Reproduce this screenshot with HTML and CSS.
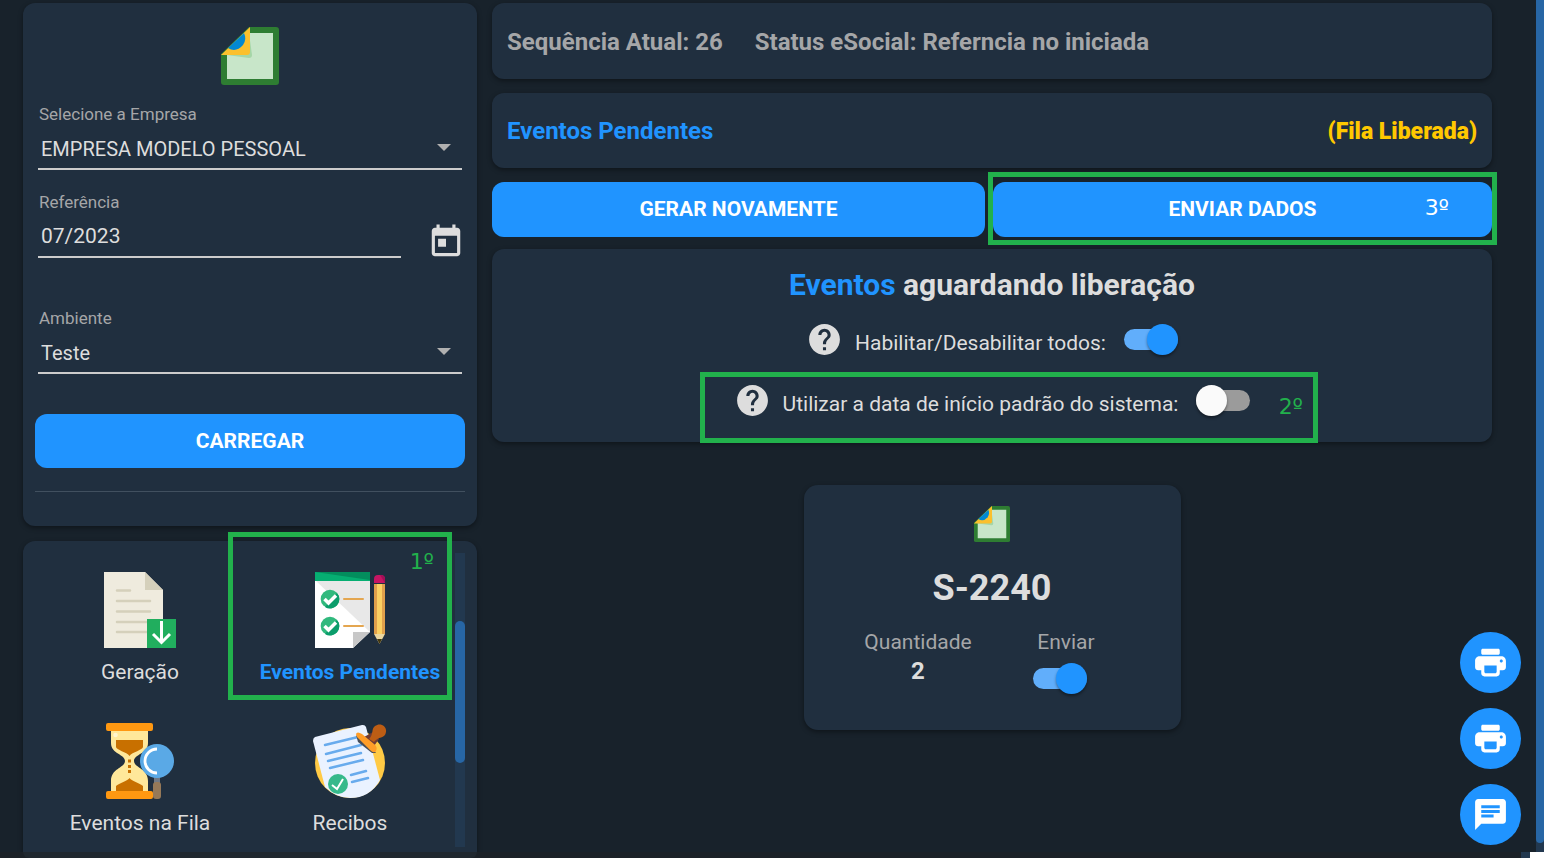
FILE: index.html
```html
<!DOCTYPE html>
<html lang="pt-BR">
<head>
<meta charset="utf-8">
<meta name="viewport" content="width=device-width, initial-scale=1">
<title>eSocial - Eventos Pendentes</title>
<link rel="stylesheet" href="styles.css">
</head>
<body>
<svg class="defs" aria-hidden="true">
  <symbol id="logo" viewBox="0 0 58 58">
    <path fill="#2e7d32" d="M28 0H55Q58 0 58 3V55Q58 58 55 58H3Q0 58 0 55V27Z"/>
    <path fill="#c8e6c9" d="M29 6H52V52H6V27Z"/>
    <path fill="#a5d6a7" d="M28 6L31 28Q31 31 28 31L6 28V24Z"/>
    <path fill="#fbc02d" d="M29 0V25Q29 28 26 28H0Z"/>
    <path fill="#0288d1" d="M23 6Q26 12 22 18Q15 26 7 21Z"/>
  </symbol>
  <symbol id="help" viewBox="0 0 24 24">
    <path d="M12 2C6.48 2 2 6.48 2 12s4.48 10 10 10 10-4.48 10-10S17.52 2 12 2zm1 17h-2v-2h2v2zm2.07-7.75l-.9.92C13.45 12.9 13 13.5 13 15h-2v-.5c0-1.1.45-2.1 1.17-2.83l1.24-1.26c.37-.36.59-.86.59-1.41 0-1.1-.9-2-2-2s-2 .9-2 2H8c0-2.21 1.79-4 4-4s4 1.79 4 4c0 .88-.36 1.68-.93 2.25z"/>
  </symbol>
  <symbol id="print" viewBox="0 0 24 24">
    <path d="M19 8H5c-1.66 0-3 1.34-3 3v4c0 1.1.9 2 2 2h2v2c0 1.1.9 2 2 2h8c1.1 0 2-.9 2-2v-2h2c1.1 0 2-.9 2-2v-4c0-1.66-1.34-3-3-3zm-4 11H9c-.55 0-1-.45-1-1v-4h8v4c0 .55-.45 1-1 1zm4-7c-.55 0-1-.45-1-1s.45-1 1-1 1 .45 1 1-.45 1-1 1zm-2-9H7c-.55 0-1 .45-1 1v2c0 .55.45 1 1 1h10c.55 0 1-.45 1-1V4c0-.55-.45-1-1-1z"/>
  </symbol>
</svg>

<div class="shell">
  <div class="content">
    <aside class="sidebar">
      <form class="card filters">
        <svg class="logo" role="img" aria-label="eSocial"><use href="#logo"/></svg>
        <div class="field">
          <label for="empresa">Selecione a Empresa</label>
          <div class="select"><select id="empresa"><option>EMPRESA MODELO PESSOAL</option></select></div>
        </div>
        <div class="date-row">
          <div class="field">
            <label for="referencia">Referência</label>
            <input id="referencia" type="text" value="07/2023">
          </div>
          <button class="icon-button" type="button" aria-label="Abrir calendário">
            <svg viewBox="0 0 24 24"><path d="M19 3h-1V1h-2v2H8V1H6v2H5c-1.11 0-1.99.9-1.99 2L3 19c0 1.1.89 2 2 2h14c1.1 0 2-.9 2-2V5c0-1.1-.9-2-2-2zm0 16H5V8h14v11zM7 10h5v5H7z"/></svg>
          </button>
        </div>
        <div class="field">
          <label for="ambiente">Ambiente</label>
          <div class="select"><select id="ambiente"><option>Teste</option></select></div>
        </div>
        <button class="button load" type="button">CARREGAR</button>
        <hr class="divider">
      </form>

      <nav class="card menu">
        <div class="menu-grid">
          <a class="menu-item" href="#geracao">
            <svg class="menu-icon" viewBox="0 0 76 76">
              <path fill="#efebde" d="M2 0H43L61 18V76H2Z"/>
              <path fill="#d5d0bb" d="M43 0V18H61Z"/>
              <path stroke="#d5d0bb" stroke-width="2.5" stroke-linecap="round" d="M15 18.500H28M15 29H48M15 39.500H48M15 50H48M15 60H48"/>
              <path fill="#21ae5e" d="M45 47H74V76H45Z"/>
              <path fill="none" stroke="#fff" stroke-width="3" d="M59.500 49V70M51 62L59.500 70.500L68 62"/>
            </svg>
            <span>Geração</span>
          </a>
          <a class="menu-item active" href="#pendentes">
            <svg class="menu-icon" viewBox="0 0 76 76">
              <path fill="#fff" d="M3 8H58V60L41 76H3Z"/>
              <path fill="#e8e8e8" d="M3 8H58V60Z"/>
              <path fill="#c8c8c8" d="M58 60H41V76Z"/>
              <path fill="#06ae72" d="M3 0H58V9H3Z"/>
              <path fill="#038d5d" d="M3 0H58V8Z"/>
              <g fill="#31b97d"><circle cx="18" cy="27" r="9.300"/><circle cx="18" cy="54" r="9.300"/></g>
              <path fill="#0b9d6b" d="M25 21A9.300 9.300 0 0 1 13 35ZM25 48A9.300 9.300 0 0 1 13 62Z"/>
              <path fill="none" stroke="#fff" stroke-width="3.500" d="M12.500 27L16.500 31L24 23.500M12.500 54L16.500 58L24 50.500"/>
              <path stroke="#e4a650" stroke-width="2" stroke-linecap="round" d="M32 27H51M32 54H51"/>
              <path fill="#c71563" d="M62 11V7Q62 3 66 3H69Q73 3 73 7V11Z"/>
              <path fill="#a20f58" d="M68 3Q73 3 73 7V11Z"/>
              <path fill="#e0a04b" d="M62 12H73V62H62Z"/><path fill="#fbd062" d="M65 12H70V62H65Z"/>
              <path fill="#ebd7a0" d="M62 62H73L67.500 72Z"/><path fill="#423711" d="M65 67H70L67.500 72Z"/>
            </svg>
            <span>Eventos Pendentes</span>
            <span class="mark mark-menu">1º</span>
          </a>
          <a class="menu-item" href="#fila">
            <svg class="menu-icon" viewBox="0 0 76 76">
              <path fill="#ffe89a" d="M9 6H46V20C46 31 32 31 32 38C32 45 46 45 46 58V70H9V58C9 45 23 45 23 38C23 31 9 31 9 20Z"/>
              <path fill="#c87000" d="M14 17H41V24C41 27 30 29 27.500 33C25 29 14 27 14 24ZM14 70V63C17 60 26 58 27.500 55C29 58 38 60 41 63V70ZM26 36.500H29V39.500H26ZM26 42H29V45H26ZM26 47H29V50H26Z"/>
              <circle cx="13.500" cy="12" r="2.300" fill="#fff5cf"/>
              <path fill="#ff9811" d="M6 0H49Q51 0 51 2V6Q51 8 49 8H6Q4 8 4 6V2Q4 0 6 0ZM6 68H49Q51 68 51 70V74Q51 76 49 76H6Q4 76 4 74V70Q4 68 6 68Z"/>
              <path fill="#707985" d="M52 53H58V62H52Z"/><rect x="51" y="59" width="8" height="17" rx="3" fill="#967958"/>
              <circle cx="55" cy="38" r="17" fill="#5aa9e6"/>
              <path fill="none" stroke="#fff" stroke-width="2.800" d="M55 26A12 12 0 0 0 55 50"/>
            </svg>
            <span>Eventos na Fila</span>
          </a>
          <a class="menu-item" href="#recibos">
            <svg class="menu-icon" viewBox="0 0 76 76">
              <circle cx="38" cy="40" r="35" fill="#ffca45"/>
              <path fill="#eaf2ff" d="M3 14L50 2Q53 1.500 54 4L68 57Q58 75 38 75Q24 75 13 64L1 18Q1 15 3 14Z"/>
              <path stroke="#68abed" stroke-width="2.500" stroke-linecap="round" d="M13 22L46 14M14 31L49 22M16 38L49 30M18 45L51 37M39 52L54 48M40 59L56 55"/>
              <circle cx="26" cy="61" r="10" fill="#36b98b"/>
              <path fill="none" stroke="#fff" stroke-width="2" d="M20 62L25 66L31 56"/>
              <path fill="#464d59" d="M44 12L46 19L60 30L64 30L60 25Z"/>
              <path fill="#713c35" d="M52 14L61 9L67 16L62 23Z"/>
              <path fill="#ff9d28" d="M44 11Q45 8 50 11L62 21Q66 24 64 28Q62 31 58 27L45 14Z"/>
              <path fill="#bd5d14" d="M57 16C62 11 59 6 63 3C68 -1 75 3 74 9C73 16 66 13 62 19Z"/>
            </svg>
            <span>Recibos</span>
          </a>
        </div>
        <div class="menu-track"><div class="menu-thumb"></div></div>
      </nav>
    </aside>

    <main class="main">
      <section class="card bar status">
        <span>Sequência Atual: 26</span>
        <span>Status eSocial: Referncia no iniciada</span>
      </section>
      <section class="card bar heading">
        <h1>Eventos Pendentes</h1>
        <strong>(Fila Liberada)</strong>
      </section>
      <div class="actions">
        <button class="button" type="button">GERAR NOVAMENTE</button>
        <div class="send">
          <button class="button" type="button">ENVIAR DADOS</button>
          <span class="mark mark-send">3º</span>
        </div>
      </div>
      <section class="card release">
        <h2><span>Eventos</span> aguardando liberação</h2>
        <div class="option">
          <svg class="help"><use href="#help"/></svg>
          <label for="todos">Habilitar/Desabilitar todos:</label>
          <input class="switch" id="todos" type="checkbox" checked>
        </div>
        <div class="option">
          <svg class="help"><use href="#help"/></svg>
          <label for="padrao">Utilizar a data de início padrão do sistema:</label>
          <input class="switch" id="padrao" type="checkbox">
          <span class="mark mark-option">2º</span>
        </div>
      </section>
      <article class="card event">
        <svg class="event-logo" aria-hidden="true"><use href="#logo"/></svg>
        <h3>S-2240</h3>
        <div class="event-data">
          <div><span>Quantidade</span><strong>2</strong></div>
          <div><label for="enviar">Enviar</label><input class="switch" id="enviar" type="checkbox" checked></div>
        </div>
      </article>
    </main>
  </div>
  <div class="page-track"><div class="page-thumb"></div></div>
</div>
<footer class="bottom-edge"><div class="edge-card"></div><div class="edge-scroll"></div><div class="edge-corner"></div></footer>

<div class="fabs">
  <button type="button" aria-label="Imprimir"><svg><use href="#print"/></svg></button>
  <button type="button" aria-label="Imprimir relatório"><svg><use href="#print"/></svg></button>
  <button type="button" aria-label="Mensagens"><svg viewBox="0 0 24 24"><path d="M20 2H4c-1.100 0-1.990.9-1.990 2L2 22l4-4h14c1.100 0 2-.9 2-2V4c0-1.100-.9-2-2-2zM6 6h12v2H6zM6 9h12v2H6zM6 12h8v2H6z" fill-rule="evenodd"/></svg></button>
</div>
</body>
</html>
```
FILE: styles.css
```css
:root {
  --page: #18222b;
  --card: #202f3f;
  --blue: #2094ff;
  --text: #dddddd;
  --muted: #a5a6a8;
  --green: #22b14c;
}
* { box-sizing: border-box; }
body {
  margin: 0;
  height: 100vh;
  display: flex;
  flex-direction: column;
  overflow: hidden;
  background: var(--page);
  color: var(--text);
  font-family: Roboto, "Liberation Sans", sans-serif;
  font-size: 21px;
  line-height: 24px;
}
button, input, select { font: inherit; color: inherit; }
h1, h2, h3 { margin: 0; }
svg { fill: currentColor; display: block; }
.defs { display: none; }

.shell { flex: 1; min-height: 0; display: flex; }
.content {
  flex: 1;
  min-width: 0;
  display: grid;
  grid-template-columns: 454fr 1000fr;
  grid-template-rows: minmax(0, 1fr);
  gap: 15px;
  padding: 3px 44px 0 23px;
}
.card {
  background: var(--card);
  border-radius: 12px;
  box-shadow: 0 2px 5px rgba(0, 0, 0, 0.4);
}

/* Sidebar */
.sidebar { display: flex; flex-direction: column; gap: 15px; min-height: 0; }
.filters { display: flex; flex-direction: column; padding: 24px 12px 34px; }
.logo { width: 58px; height: 58px; align-self: center; margin-bottom: 19px; }
.field { padding: 0 3px; }
.field label { display: block; padding-left: 1px; font-size: 17px; line-height: 20px; color: var(--muted); }
.field input, .field select {
  display: block;
  width: 100%;
  height: 46px;
  padding: 4px 3px 0;
  border: 0;
  border-bottom: 2px solid #cccccc;
  border-radius: 0;
  outline: 0;
  background: transparent;
  appearance: none;
}
.field select { padding-top: 6px; font-size: 20px; }
.select { position: relative; }
.select::after {
  content: "";
  position: absolute;
  right: 11px;
  top: 20px;
  border: 7px solid transparent;
  border-top-color: #b0b0b0;
  border-bottom: 0;
}
.date-row { display: flex; align-items: flex-end; gap: 22px; margin: 22px 0 50px 0; }
.date-row .field { flex: 1; }
.icon-button { display: flex; justify-content: flex-end; width: 39px; height: 35px; padding: 0; border: 0; background: transparent; }
.icon-button svg { width: 38px; height: 38px; }
.button {
  height: 55px;
  padding: 0 0 2px;
  border: 0;
  border-radius: 12px;
  background: var(--blue);
  color: #ffffff;
  font-weight: 700;
}
.load { height: 54px; margin-top: 40px; padding: 0; }
.divider { width: 100%; height: 1px; margin: 23px 0 0; border: 0; background: #41505f; }

.menu { flex: 1; min-height: 0; display: flex; padding: 12px 12px 5px; border-radius: 12px 12px 0 0; }
.menu-grid {
  flex: 1;
  display: grid;
  grid-template-columns: 1fr 1fr;
  align-content: start;
  gap: 39px 0;
  padding-top: 19px;
}
.menu-item {
  position: relative;
  display: flex;
  flex-direction: column;
  align-items: center;
  gap: 12px;
  color: var(--text);
  text-decoration: none;
}
.menu-item.active { color: var(--blue); font-weight: 700; }
.menu-icon { width: 76px; height: 76px; }
.menu-track { width: 10px; padding-top: 68px; background: #22384f; }
.menu-thumb { height: 142px; border-radius: 5px; background: #2766a5; }

/* Step marks */
.mark {
  position: absolute;
  border: 5px solid var(--green);
  color: var(--green);
  font: 400 22px/28px "DejaVu Sans", sans-serif;
  text-align: right;
  pointer-events: none;
}
.mark-menu { inset: -40px 3px -16px -17px; padding: 11px 13px; }
.mark-send { inset: -10px -5px -8px -5px; padding: 17px 43px; color: #ffffff; }
.mark-option { inset: -13px 174px -27px 208px; padding: 16px 10px; }

/* Main */
.main { display: flex; flex-direction: column; min-width: 0; }
.bar { display: flex; align-items: center; padding: 0 15px; font-size: 24px; font-weight: 700; line-height: 28px; }
.status { height: 76px; gap: 32px; padding-top: 2px; color: var(--muted); }
.heading { height: 75px; margin-top: 14px; justify-content: space-between; }
.heading h1 { font-size: 24px; color: var(--blue); }
.heading strong { padding-top: 2px; font-size: 23px; color: #ffc800; }
.actions { display: grid; grid-template-columns: 493fr 499fr; gap: 8px; margin: 14px 0 12px; }
.send { position: relative; display: grid; }
.release { padding: 18px 0 26px; }
.release h2 { font-size: 30px; line-height: 36px; text-align: center; }
.release h2 span { color: var(--blue); }
.option { position: relative; display: flex; justify-content: center; align-items: center; height: 31px; margin-top: 21px; }
.option + .option { margin-top: 30px; }
.option label { padding-top: 6px; margin: 0 18px 0 12px; }
.help { width: 37px; height: 37px; }

.switch { position: relative; appearance: none; width: 54px; height: 31px; margin: 0; }
.switch::before {
  content: "";
  position: absolute;
  inset: 5px 0;
  border-radius: 11px;
  background: #9b9b9b;
}
.switch::after {
  content: "";
  position: absolute;
  left: 0;
  top: 0;
  width: 31px;
  height: 31px;
  border-radius: 50%;
  background: #fafafa;
  box-shadow: 0 2px 3px rgba(0, 0, 0, 0.4);
}
.switch:checked::before { background: #61aefb; }
.switch:checked::after { left: auto; right: 0; background: var(--blue); }

.event { align-self: center; width: 377px; margin-top: 43px; padding: 21px 0 36px; border-radius: 14px; display: flex; flex-direction: column; align-items: center; }
.event-logo { width: 36px; height: 36px; }
.event h3 { margin: 24px 0 20px; font-size: 36px; line-height: 44px; }
.event-data { display: flex; }
.event-data > div { width: 148px; display: flex; flex-direction: column; align-items: center; }
.event-data span, .event-data label { color: var(--muted); }
.event-data strong { font-size: 24px; line-height: 34px; }
.event-data .switch { margin: 9px 12px 0 0; }

/* Page edges */
.page-track { width: 8px; background: #22384f; }
.page-thumb { height: 846px; max-height: 99%; border-radius: 0 0 5px 5px; background: #2766a5; }
.bottom-edge { display: flex; height: 6px; padding-left: 23px; background: #1b2127; }
.edge-card { width: 454px; margin-right: auto; border-radius: 0 0 12px 12px; background: #20282f; }
.edge-scroll { width: 9px; background: #22384f; }
.edge-corner { width: 14px; background: #ffffff; }

.fabs { position: fixed; right: 23px; bottom: 13px; display: flex; flex-direction: column; gap: 15px; }
.fabs button { width: 61px; height: 61px; padding: 12px; border: 0; border-radius: 50%; background: var(--blue); color: #ffffff; }
.fabs svg { width: 37px; height: 37px; }
```
